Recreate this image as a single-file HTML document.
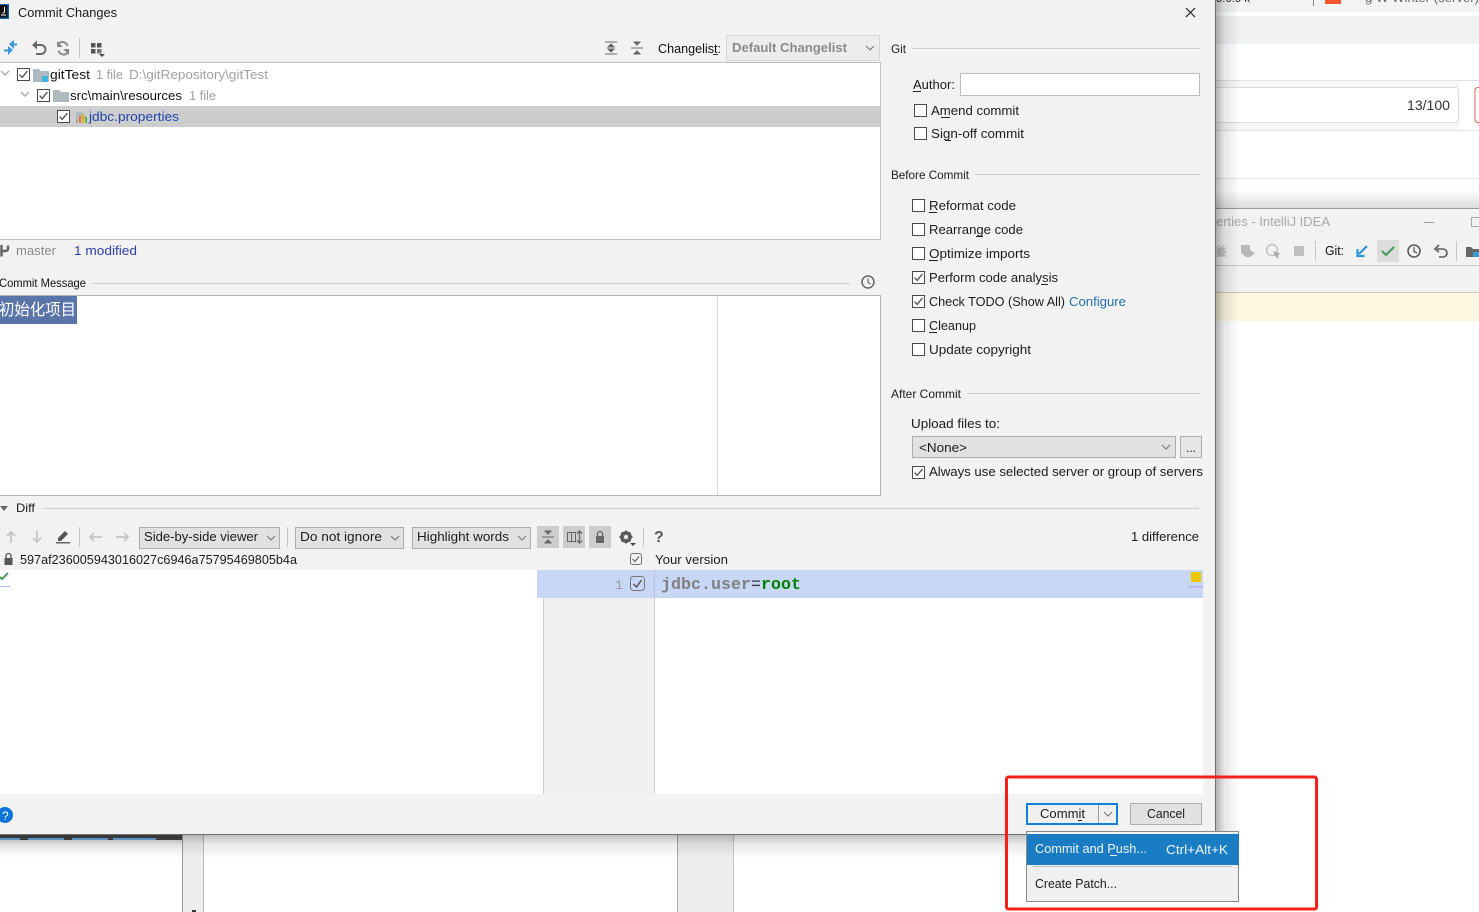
<!DOCTYPE html>
<html><head><meta charset="utf-8"><title>Commit Changes</title>
<style>
html,body{margin:0;padding:0;background:#fff;width:1479px;height:912px;overflow:hidden}
svg{display:block;position:absolute;left:0;top:0}
text{font-family:"Liberation Sans","Noto Sans CJK SC",sans-serif;font-size:13px;fill:#1c1c1c}
</style></head><body>
<svg width="1479" height="912" viewBox="0 0 1479 912" xmlns="http://www.w3.org/2000/svg">
<defs>
<linearGradient id="shR" x1="0" x2="1" y1="0" y2="0"><stop offset="0" stop-color="#000" stop-opacity=".3"/><stop offset=".35" stop-color="#000" stop-opacity=".1"/><stop offset="1" stop-color="#000" stop-opacity="0"/></linearGradient>
<linearGradient id="shB" x1="0" x2="0" y1="0" y2="1"><stop offset="0" stop-color="#000" stop-opacity=".3"/><stop offset=".4" stop-color="#000" stop-opacity=".1"/><stop offset="1" stop-color="#000" stop-opacity="0"/></linearGradient>
<linearGradient id="shT" x1="0" x2="0" y1="1" y2="0"><stop offset="0" stop-color="#000" stop-opacity=".14"/><stop offset="1" stop-color="#000" stop-opacity="0"/></linearGradient>
<g id="cb"><rect x=".5" y=".5" width="12" height="12" fill="#fff" stroke="#4a4a4a"/><path d="M2.600 6.600 5.200 9.400 10.400 3" fill="none" stroke="#4a4a4a" stroke-width="1.300"/></g>
<g id="cbe"><rect x=".5" y=".5" width="12" height="12" fill="#fff" stroke="#4a4a4a"/></g>
<path id="chev" d="M0 0 4 4 8 0" fill="none" stroke="#777" stroke-width="1.100"/>
</defs>

<!-- background right side -->
<rect width="1479" height="912" fill="#fff"/>
<rect x="1216" y="0" width="263" height="12" fill="#f1f3f4"/>
<rect x="1216" y="16" width="263" height="28" fill="#f0f1f3"/>
<text x="1216" y="2" style="font-size:11px" fill="#555" textLength="34" lengthAdjust="spacingAndGlyphs">0:0:0 k</text>
<rect x="1313" y="0" width="1" height="6" fill="#888"/>
<rect x="1325" y="0" width="16" height="4" fill="#fa5533"/>
<text x="1365" y="2" style="font-size:12px;fill:#666" textLength="114" lengthAdjust="spacingAndGlyphs">g  W  Winter  (server)</text>
<rect x="1216" y="80" width="263" height="1" fill="#e2e2e2"/>
<rect x="1216" y="81" width="243" height="49" fill="#f7f7f7"/>
<rect x="1205" y="87.500" width="253.500" height="35" rx="3" fill="#fff" stroke="#dcdcdc"/>
<text x="1407" y="110" style="font-size:14px;fill:#333" textLength="43" lengthAdjust="spacingAndGlyphs">13/100</text>
<rect x="1475" y="87.500" width="20" height="35" rx="3" fill="#fff" stroke="#e85c4f"/>
<rect x="1216" y="130" width="263" height="1" fill="#e4e4e4"/>
<rect x="1216" y="178" width="263" height="1" fill="#e6e6e6"/>
<rect x="1216" y="190" width="263" height="18" fill="url(#shT)"/>
<rect x="1216" y="208" width="263" height="84" fill="#f2f2f2"/>
<rect x="1216" y="208" width="263" height="1" fill="#9a9a9a"/>
<text x="1216" y="226" style="fill:#a8a8a8" textLength="114" lengthAdjust="spacingAndGlyphs">erties - IntelliJ IDEA</text>
<rect x="1424" y="222" width="10" height="1" fill="#999"/>
<rect x="1471.500" y="217.500" width="12" height="9" fill="none" stroke="#aaa"/>
<ellipse cx="1221" cy="252" rx="4.500" ry="5" fill="#c4c4c4"/><path d="M1215 248h12M1215 252h12M1215 256h12M1218 245l2 2M1224 245l-2 2" stroke="#c4c4c4" fill="none"/>
<path d="M1241 245h9v5l5 3-5 4h-4l-5-4z" fill="#b8b8b8"/>
<circle cx="1272" cy="250" r="5.500" fill="none" stroke="#c0c0c0" stroke-width="1.500"/><path d="M1273 251l8 3-3 1 1 4-4-3z" fill="#aaa"/>
<rect x="1294" y="246" width="10" height="10" fill="#c0c0c0"/>
<rect x="1315" y="241" width="1" height="20" fill="#c8c8c8"/>
<text x="1325" y="255" style="fill:#111" textLength="19" lengthAdjust="spacingAndGlyphs">Git:</text>
<path d="M1367 246 1359 254M1357.500 249v7h7" fill="none" stroke="#2a95d9" stroke-width="2.200"/>
<rect x="1377" y="240" width="22" height="22" fill="#dcdcdc"/>
<path d="M1382 251l4 4 8-8" fill="none" stroke="#4a9e5c" stroke-width="2.200"/>
<circle cx="1414" cy="251" r="6" fill="none" stroke="#5a5a5a" stroke-width="1.600"/><path d="M1414 247v4.500l3 1.500" fill="none" stroke="#5a5a5a" stroke-width="1.300"/>
<path d="M1437 249h6a4 4 0 0 1 0 8h-4M1439 245l-4 4 4 3" fill="none" stroke="#5a5a5a" stroke-width="1.600"/>
<rect x="1456" y="241" width="1" height="20" fill="#c8c8c8"/>
<path d="M1466 247h5l2 2h6v8h-13z" fill="#666"/><rect x="1473" y="252" width="6" height="5" fill="#3e9ad6"/>
<rect x="1216" y="265" width="263" height="1" fill="#c8c8c8"/>
<rect x="1216" y="292" width="263" height="1" fill="#c8c8c8"/>
<rect x="1216" y="293" width="263" height="28" fill="#fef8e2"/>

<!-- below dialog -->
<rect x="182" y="835" width="21" height="77" fill="#eeeeee"/>
<rect x="182" y="835" width="1" height="77" fill="#9c9c9c"/><rect x="203" y="835" width="1" height="77" fill="#bdbdbd"/>
<rect x="678" y="835" width="55" height="77" fill="#eeeeee"/>
<rect x="677" y="835" width="1" height="77" fill="#a8a8a8"/><rect x="733" y="835" width="1" height="77" fill="#c4c4c4"/>
<rect x="192" y="910" width="4" height="2" fill="#333"/>
<rect x="0" y="835" width="1236" height="24" fill="url(#shB)" opacity=".8"/>
<rect x="0" y="834" width="182" height="6" fill="#3a3a3a"/>
<rect x="0" y="838" width="20" height="2" fill="#5d93c6"/><rect x="28" y="838" width="36" height="2" fill="#5d93c6"/><rect x="72" y="838" width="36" height="2" fill="#5d93c6"/><rect x="113" y="838" width="43" height="2" fill="#5d93c6"/>
<rect x="0" y="840" width="182" height="14" fill="url(#shB)" opacity=".35"/>
<rect x="1216" y="0" width="24" height="850" fill="url(#shR)"/>

<!-- dialog -->
<rect x="0" y="0" width="1215" height="834" fill="#f2f2f2"/>
<rect x="1215" y="0" width="1" height="835" fill="#6e6e6e"/>
<rect x="0" y="834" width="1216" height="1" fill="#6e6e6e"/>

<!-- title bar -->
<rect x="0" y="4" width="9" height="15" fill="#0b5fa8"/><rect x="0" y="5" width="7.500" height="12.500" fill="#111"/><rect x="1" y="14.500" width="5" height="1" fill="#fff"/><path d="M4.500 7v4.500q0 1.500-2 1.500" fill="none" stroke="#fff"/>
<text x="18" y="17" textLength="99" lengthAdjust="spacingAndGlyphs">Commit Changes</text>
<path d="M1186 8l9 9M1195 8l-9 9" stroke="#222" stroke-width="1.200" fill="none"/>

<!-- top toolbar -->
<path d="M4 50.500h6M17 44.500h-6" fill="none" stroke="#3d9ad8" stroke-width="2"/>
<path d="M8 46v9l5-5zM14 40v9l-5-5z" fill="#3d9ad8"/>
<path d="M33.500 45h7.500a4.500 4.500 0 0 1 0 9h-5" fill="none" stroke="#666" stroke-width="1.900"/><path d="M37 40.500v9L32 45z" fill="#666"/>
<path d="M67.500 46a5.300 5.300 0 0 0-9.300-2M58.500 50.500a5.300 5.300 0 0 0 9.300 2" fill="none" stroke="#8a8a8a" stroke-width="2"/><path d="M57 41v6h6zM69 55v-6h-6z" fill="#8a8a8a"/>
<rect x="79" y="38" width="1" height="20" fill="#c8c8c8"/>
<rect x="91" y="43" width="4.500" height="4.500" fill="#555"/><rect x="97" y="43" width="4.500" height="4.500" fill="#555"/><rect x="91" y="49" width="4.500" height="4.500" fill="#555"/><rect x="97" y="49" width="4.500" height="4.500" fill="#777"/><path d="M99 54h6l-3 3z" fill="#444"/>
<path d="M605 42h12M605 54h12M608 47h6l-3-3zM608 49h6l-3 3z" fill="#666" stroke="#666"/>
<path d="M631 48h12M634 42l3 3 3-3zM634 54l3-3 3 3z" fill="#666" stroke="#666"/>
<text x="658" y="53" style="fill:#111" textLength="63" lengthAdjust="spacingAndGlyphs">Changelist:</text><rect x="713" y="54" width="5" height="1" fill="#333"/>
<rect x="726.500" y="35.500" width="153" height="25" fill="#ededed" stroke="#d4d4d4"/>
<text x="732" y="52" style="fill:#8a8a8a;font-weight:bold" textLength="115" lengthAdjust="spacingAndGlyphs">Default Changelist</text>
<use href="#chev" x="866" y="46"/>

<!-- tree panel -->
<rect x="-1" y="62.500" width="881.500" height="177" fill="#fff" stroke="#c0c0c0"/>
<rect x="0" y="106" width="880" height="21" fill="#cdcdcd"/>
<path d="M1 71l4 4 4-4" fill="none" stroke="#aaa" stroke-width="1.400"/>
<path d="M21 92l4 4 4-4" fill="none" stroke="#aaa" stroke-width="1.400"/>
<use href="#cb" x="17" y="68"/><use href="#cb" x="37" y="89"/><use href="#cb" x="57" y="110"/>
<path d="M33 69h6l2 2h8v11H33z" fill="#aeb9c0"/><rect x="42" y="76" width="6" height="6" fill="#40b6e0"/>
<path d="M53 90h6l2 2h8v10H53z" fill="#aeb9c0"/>
<text x="50" y="79" style="fill:#111" textLength="40" lengthAdjust="spacingAndGlyphs">gitTest</text>
<text x="96" y="79" style="fill:#a0a0a0" textLength="27" lengthAdjust="spacingAndGlyphs">1 file</text>
<text x="129" y="79" style="fill:#a0a0a0" textLength="139" lengthAdjust="spacingAndGlyphs">D:\gitRepository\gitTest</text>
<text x="70" y="100" style="fill:#111" textLength="112" lengthAdjust="spacingAndGlyphs">src\main\resources</text>
<text x="189" y="100" style="fill:#a0a0a0" textLength="27" lengthAdjust="spacingAndGlyphs">1 file</text>
<path d="M76 112h6l4 4v3H76z" fill="#aeb9c0"/><rect x="79" y="116" width="2" height="7" fill="#e8742e"/><rect x="82" y="114" width="2" height="9" fill="#e0b020"/><rect x="85" y="117" width="2" height="6" fill="#62b543"/><rect x="76" y="119" width="2" height="4" fill="#9aa7b0"/>
<text x="89" y="121" style="fill:#1f45ad" textLength="90" lengthAdjust="spacingAndGlyphs">jdbc.properties</text>

<!-- status -->
<path d="M1.500 245v11.500M8 245.500v3q0 2.500-3 2.500H2" fill="none" stroke="#666" stroke-width="2.500"/>
<text x="16" y="255" style="fill:#888" textLength="40" lengthAdjust="spacingAndGlyphs">master</text>
<text x="74" y="255" style="fill:#2b3fa8" textLength="63" lengthAdjust="spacingAndGlyphs">1 modified</text>

<!-- commit message -->
<text x="-1" y="287" style="font-size:12px;fill:#111" textLength="87" lengthAdjust="spacingAndGlyphs">Commit Message</text>
<rect x="92" y="283" width="758" height="1" fill="#cfcfcf"/>
<circle cx="868" cy="282" r="6" fill="none" stroke="#666" stroke-width="1.500"/><path d="M868 278.500v4l2.500 1.500" fill="none" stroke="#666" stroke-width="1.200"/>
<rect x="-1" y="295.500" width="881.500" height="200" fill="#fff" stroke="#b4b4b4"/>
<rect x="717" y="296" width="1" height="199" fill="#dcdcdc"/>
<rect x="0" y="296" width="77" height="28" fill="#5a75a9"/>
<text x="-1" y="315" style="font-size:16px;fill:#fff" textLength="77" lengthAdjust="spacingAndGlyphs">初始化项目</text>

<!-- right panel -->
<text x="891" y="53" style="font-size:12px" textLength="15" lengthAdjust="spacingAndGlyphs">Git</text>
<rect x="912" y="48" width="288" height="1" fill="#cfcfcf"/>
<text x="913" y="89" textLength="42" lengthAdjust="spacingAndGlyphs">Author:</text><rect x="913" y="91" width="8" height="1" fill="#222"/>
<rect x="960.500" y="73.500" width="239" height="22" fill="#fff" stroke="#bcbcbc"/>
<use href="#cbe" x="914" y="104"/><text x="931" y="115" textLength="88" lengthAdjust="spacingAndGlyphs">Amend commit</text><rect x="941" y="117" width="9" height="1" fill="#222"/>
<use href="#cbe" x="914" y="127"/><text x="931" y="138" textLength="93" lengthAdjust="spacingAndGlyphs">Sign-off commit</text><rect x="945" y="140" width="6" height="1" fill="#222"/>

<text x="891" y="179" style="font-size:12px" textLength="78" lengthAdjust="spacingAndGlyphs">Before Commit</text>
<rect x="975" y="174" width="225" height="1" fill="#cfcfcf"/>
<use href="#cbe" x="912" y="199"/><text x="929" y="210" textLength="87" lengthAdjust="spacingAndGlyphs">Reformat code</text><rect x="929" y="212" width="8" height="1" fill="#222"/>
<use href="#cbe" x="912" y="223"/><text x="929" y="234" textLength="94" lengthAdjust="spacingAndGlyphs">Rearrange code</text><rect x="976" y="236" width="7" height="1" fill="#222"/>
<use href="#cbe" x="912" y="247"/><text x="929" y="258" textLength="101" lengthAdjust="spacingAndGlyphs">Optimize imports</text><rect x="929" y="260" width="9" height="1" fill="#222"/>
<use href="#cb" x="912" y="271"/><text x="929" y="282" textLength="129" lengthAdjust="spacingAndGlyphs">Perform code analysis</text><rect x="1041" y="284" width="7" height="1" fill="#222"/>
<use href="#cb" x="912" y="295"/><text x="929" y="306" textLength="136" lengthAdjust="spacingAndGlyphs">Check TODO (Show All)</text>
<text x="1069" y="306" style="fill:#2470b3" textLength="57" lengthAdjust="spacingAndGlyphs">Configure</text>
<use href="#cbe" x="912" y="319"/><text x="929" y="330" textLength="47" lengthAdjust="spacingAndGlyphs">Cleanup</text><rect x="929" y="332" width="8" height="1" fill="#222"/>
<use href="#cbe" x="912" y="343"/><text x="929" y="354" textLength="102" lengthAdjust="spacingAndGlyphs">Update copyright</text>

<text x="891" y="398" style="font-size:12px" textLength="70" lengthAdjust="spacingAndGlyphs">After Commit</text>
<rect x="967" y="393" width="233" height="1" fill="#cfcfcf"/>
<text x="911" y="428" textLength="89" lengthAdjust="spacingAndGlyphs">Upload files to:</text>
<rect x="912.500" y="436.500" width="263" height="21" fill="#e1e1e1" stroke="#adadad"/>
<text x="919" y="452" textLength="48" lengthAdjust="spacingAndGlyphs">&lt;None&gt;</text>
<use href="#chev" x="1162" y="445"/>
<rect x="1180.500" y="436.500" width="21" height="21" fill="#e6e6e6" stroke="#adadad"/>
<text x="1186" y="452" textLength="10" lengthAdjust="spacingAndGlyphs">...</text>
<use href="#cb" x="912" y="466"/><text x="929" y="476" textLength="274" lengthAdjust="spacingAndGlyphs">Always use selected server or group of servers</text>

<!-- diff header -->
<rect x="0" y="495" width="881" height="1" fill="#b4b4b4"/>
<path d="M0 506h8l-4 5z" fill="#666"/>
<text x="16" y="512" style="font-size:12px" textLength="19" lengthAdjust="spacingAndGlyphs">Diff</text>
<rect x="43" y="508" width="1156" height="1" fill="#cfcfcf"/>

<!-- diff toolbar -->
<path d="M11 543v-11M7 536l4-4 4 4" fill="none" stroke="#c4c4c4" stroke-width="1.800"/>
<path d="M37 531v11M33 538l4 4 4-4" fill="none" stroke="#c4c4c4" stroke-width="1.800"/>
<path d="M58 538l7-7 3 3-7 7h-3z" fill="#555"/><rect x="56" y="542" width="14" height="1.500" fill="#666"/>
<rect x="79" y="527" width="1" height="20" fill="#c8c8c8"/>
<path d="M102 537H90M94 533l-4 4 4 4" fill="none" stroke="#c4c4c4" stroke-width="1.800"/>
<path d="M116 537h12M124 533l4 4-4 4" fill="none" stroke="#c4c4c4" stroke-width="1.800"/>
<rect x="139.500" y="527.500" width="140" height="21" fill="#e1e1e1" stroke="#adadad"/>
<text x="144" y="541" textLength="114" lengthAdjust="spacingAndGlyphs">Side-by-side viewer</text>
<use href="#chev" x="267" y="536"/>
<rect x="287" y="527" width="1" height="20" fill="#c8c8c8"/>
<rect x="295.500" y="527.500" width="108" height="21" fill="#e1e1e1" stroke="#adadad"/>
<text x="300" y="541" textLength="82" lengthAdjust="spacingAndGlyphs">Do not ignore</text>
<use href="#chev" x="391" y="536"/>
<rect x="412.500" y="527.500" width="118" height="21" fill="#e1e1e1" stroke="#adadad"/>
<text x="417" y="541" textLength="92" lengthAdjust="spacingAndGlyphs">Highlight words</text>
<use href="#chev" x="518" y="536"/>
<rect x="537" y="526" width="22" height="22" fill="#cdcdcd"/>
<path d="M542 537h12M545 531h6l-3 3zM545 543h6l-3-3z" fill="#666" stroke="#666"/>
<rect x="563" y="526" width="22" height="22" fill="#cdcdcd"/>
<rect x="567.500" y="532.500" width="8" height="9" fill="none" stroke="#666"/><path d="M571.500 532v10" stroke="#666"/><path d="M579.500 531v12M577 533.500l2.500-2.500 2.500 2.500M577 540.500l2.500 2.500 2.500-2.500" fill="none" stroke="#666" stroke-width="1.300"/>
<rect x="589" y="526" width="22" height="22" fill="#cdcdcd"/>
<rect x="596" y="536" width="8" height="7" fill="#666"/><path d="M597.500 536v-2a2.500 2.500 0 0 1 5 0v2" fill="none" stroke="#666" stroke-width="1.300"/>
<circle cx="626" cy="537" r="4.500" fill="none" stroke="#555" stroke-width="2.500"/><path d="M626 530.500v13M619.500 537h13M621.500 532.500l9 9M630.500 532.500l-9 9" stroke="#555" stroke-width="1.700"/><circle cx="626" cy="537" r="2" fill="#f2f2f2"/>
<path d="M630 543h6l-3 3z" fill="#444"/>
<rect x="643" y="527" width="1" height="20" fill="#c8c8c8"/>
<text x="654" y="542" style="font-size:16px;fill:#555;font-weight:bold">?</text>
<text x="1131" y="541" textLength="68" lengthAdjust="spacingAndGlyphs">1 difference</text>

<!-- diff title row -->
<rect x="4.500" y="558" width="8" height="7" fill="#555"/><path d="M6 558v-2a2.500 2.500 0 0 1 5 0v2" fill="none" stroke="#555" stroke-width="1.300"/>
<text x="20" y="564" textLength="277" lengthAdjust="spacingAndGlyphs">597af236005943016027c6946a75795469805b4a</text>
<rect x="630.500" y="553.500" width="11" height="11" rx="2" fill="none" stroke="#777"/><path d="M632.500 559l2.500 2.500 4-5" fill="none" stroke="#666" stroke-width="1.200"/>
<text x="655" y="564" textLength="73" lengthAdjust="spacingAndGlyphs">Your version</text>

<!-- diff content -->
<rect x="0" y="570" width="543" height="224" fill="#fff"/>
<rect x="543" y="570" width="112" height="224" fill="#f0f0f0"/>
<rect x="543" y="570" width="1" height="224" fill="#cfcfcf"/>
<rect x="654" y="570" width="1" height="224" fill="#cfcfcf"/>
<rect x="655" y="570" width="548" height="224" fill="#fff"/>
<rect x="537" y="570" width="666" height="28" fill="#c9d7f7"/>
<rect x="654" y="570" width="1" height="28" fill="#b7c4e0"/>
<path d="M0 577l2 2 6-6" fill="none" stroke="#4a9e5c" stroke-width="2"/>
<rect x="0" y="586" width="10" height="1" fill="#b0c0ee"/>
<text x="615" y="589" style="font-family:'Liberation Mono',monospace;font-size:13px;fill:#999">1</text>
<rect x="630.500" y="576.500" width="14" height="14" rx="3" fill="none" stroke="#777"/><path d="M633.500 584l3 3 5-7" fill="none" stroke="#555" stroke-width="1.500"/>
<text x="661" y="589" style="font-family:'Liberation Mono',monospace;font-size:16.600px;font-weight:bold;fill:#808080" textLength="90" lengthAdjust="spacingAndGlyphs">jdbc.user</text>
<text x="751" y="589" style="font-family:'Liberation Mono',monospace;font-size:16.600px;fill:#333">=</text>
<text x="761" y="589" style="font-family:'Liberation Mono',monospace;font-size:16.600px;font-weight:bold;fill:#008000" textLength="40" lengthAdjust="spacingAndGlyphs">root</text>
<rect x="1191" y="572" width="10" height="10" fill="#edc700"/>
<rect x="1189" y="586" width="14" height="1.500" fill="#b9adf5"/>

<!-- footer -->
<circle cx="5" cy="815" r="8" fill="#0a74da"/>
<text x="2" y="820" style="font-size:12px;fill:#fff">?</text>

<!-- buttons -->
<rect x="1027" y="804" width="90" height="20" fill="#f0f0f0" stroke="#1083d9" stroke-width="2"/>
<rect x="1098" y="805" width="1" height="18" fill="#999"/>
<text x="1040" y="818" textLength="45" lengthAdjust="spacingAndGlyphs">Commit</text><rect x="1078" y="820" width="4" height="1" fill="#222"/>
<use href="#chev" x="1104" y="812"/>
<rect x="1130.500" y="803.500" width="71" height="21" fill="#e1e1e1" stroke="#adadad"/>
<text x="1147" y="818" textLength="38" lengthAdjust="spacingAndGlyphs">Cancel</text>

<!-- popup -->
<rect x="1026.500" y="831.500" width="212" height="70" fill="#f0f0f0" stroke="#8a8a8a"/>
<rect x="1027" y="834" width="212" height="31" fill="#1a7cc3"/>
<text x="1035" y="853" style="fill:#f0f6fb" textLength="112" lengthAdjust="spacingAndGlyphs">Commit and Push...</text><rect x="1110" y="855" width="7" height="1" fill="#f0f6fb"/>
<text x="1166" y="854" style="fill:#f0f6fb" textLength="62" lengthAdjust="spacingAndGlyphs">Ctrl+Alt+K</text>
<rect x="1033" y="866" width="199" height="1" fill="#bdbdbd"/>
<text x="1035" y="888" textLength="82" lengthAdjust="spacingAndGlyphs">Create Patch...</text>

<!-- red highlight box -->
<rect x="1006.500" y="777" width="310" height="132" rx="2" fill="none" stroke="#f5201a" stroke-width="3"/>
</svg>
</body></html>
